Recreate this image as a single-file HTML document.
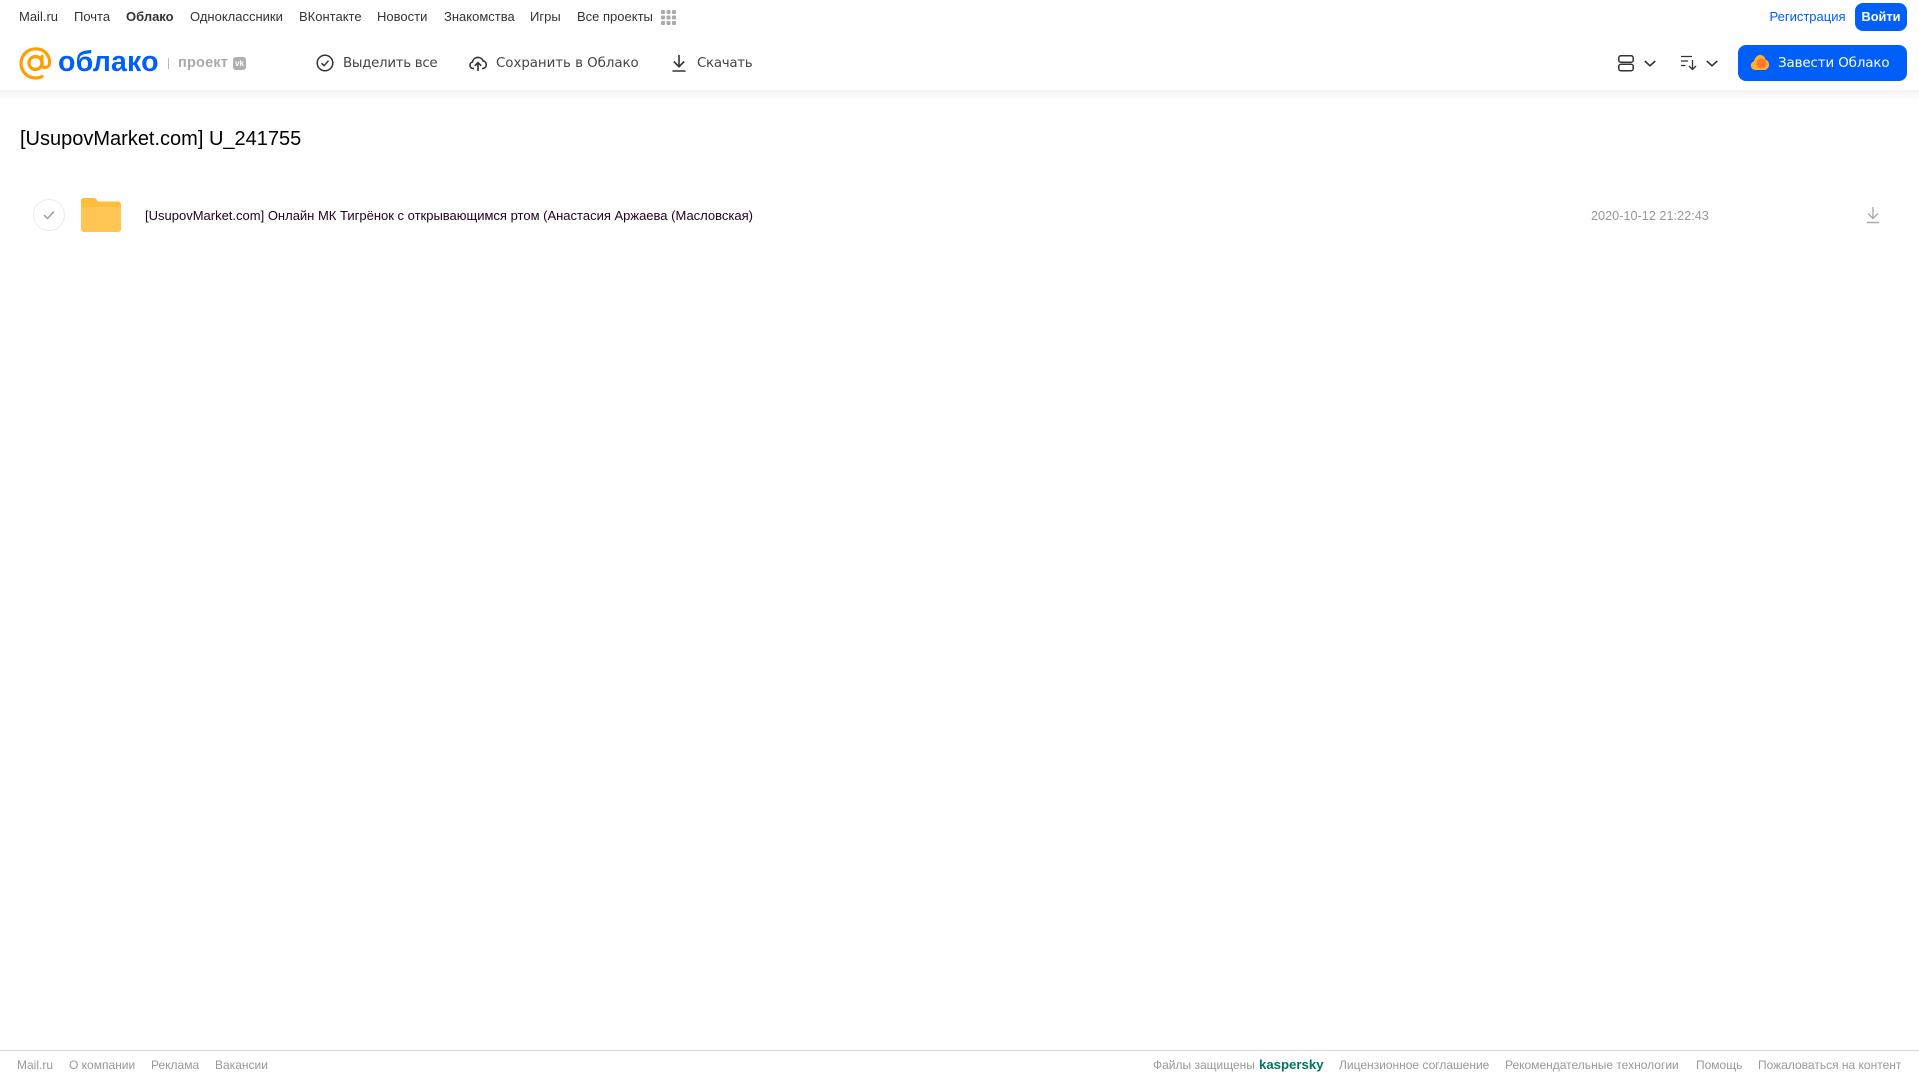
<!DOCTYPE html>
<html lang="ru"><head><meta charset="utf-8"><title>Облако</title>
<style>
html,body{margin:0;padding:0;background:#fff;overflow:hidden}
body{width:1919px;height:1079px;position:relative;font-family:"Liberation Sans",sans-serif}
.t{position:absolute;white-space:nowrap;line-height:20px}
.n{top:7px;font-size:13px;color:#333}
.b{top:54px;font-size:13.400px;color:#444;font-family:"DejaVu Sans",sans-serif;letter-spacing:-.1px}
.f{top:1055px;font-size:12px;color:#999}
svg{position:absolute;overflow:visible}
</style></head><body>
<div style="position:absolute;left:0;top:90px;width:1919px;height:10px;background:linear-gradient(#f3f3f3,#fff)"></div>

<span class="t n" style="left:19px">Mail.ru</span>
<span class="t n" style="left:74px">Почта</span>
<span class="t n" style="left:126px;font-weight:bold">Облако</span>
<span class="t n" style="left:190px">Одноклассники</span>
<span class="t n" style="left:299px">ВКонтакте</span>
<span class="t n" style="left:377px">Новости</span>
<span class="t n" style="left:444px">Знакомства</span>
<span class="t n" style="left:530px">Игры</span>
<span class="t n" style="left:577px">Все проекты</span>
<svg style="left:661px;top:10px" width="15" height="15" fill="#aaa"><rect x="0" y="0" width="4" height="4" rx="1"/><rect x="5.500" y="0" width="4" height="4" rx="1"/><rect x="11" y="0" width="4" height="4" rx="1"/><rect x="0" y="5.500" width="4" height="4" rx="1"/><rect x="5.500" y="5.500" width="4" height="4" rx="1"/><rect x="11" y="5.500" width="4" height="4" rx="1"/><rect x="0" y="11" width="4" height="4" rx="1"/><rect x="5.500" y="11" width="4" height="4" rx="1"/><rect x="11" y="11" width="4" height="4" rx="1"/></svg>

<span class="t n" style="left:1769.500px;color:#005ff9">Регистрация</span>
<div style="position:absolute;left:1855px;top:3px;width:52px;height:28px;border-radius:8px;background:#005ff9;color:#fff;font-size:12.800px;font-weight:bold;line-height:28px;text-align:center">Войти</div>

<svg style="left:19px;top:47px" width="33" height="33" viewBox="0 0 33 33" fill="none" stroke="#ff9e00" stroke-width="3.200" stroke-linecap="round"><circle cx="16.500" cy="16" r="6.500"/><path d="M23 9.500v8.500c0 3.600 6.900 3.600 7.500-1.500C31.300 8 25 1.800 16.500 1.800A14.600 14.600 0 0 0 2 16.300c0 8.300 6.500 14.700 14.500 14.700 2.500 0 4.700-.5 6.500-1.500"/></svg>
<span class="t" style="left:58px;top:45px;font-size:28.500px;line-height:34px;color:#005ff9;font-weight:bold;letter-spacing:.2px">облако</span>
<div style="position:absolute;left:168px;top:58px;width:1px;height:11px;background:#bbb"></div>
<span class="t" style="left:178px;top:53px;font-size:14.500px;font-weight:bold;color:#aaa;letter-spacing:.2px">проект</span>
<div style="position:absolute;left:233px;top:57px;width:13px;height:13px;border-radius:3px;background:#b0b0b0;color:#fff;font-size:8px;font-weight:bold;line-height:13px;text-align:center">vk</div>

<svg style="left:316px;top:54px" width="18" height="18" viewBox="0 0 18 18" fill="none" stroke="#333" stroke-width="1.500"><circle cx="9" cy="9" r="7.800"/><path d="M5.500 9.200l2.500 2.500 4.500-5"/></svg>
<span class="t b" style="left:343px;letter-spacing:-.3px">Выделить все</span>
<svg style="left:469px;top:54px" width="18" height="18" viewBox="0 0 18 18" fill="none" stroke="#333" stroke-width="1.600"><path d="M5 14.500H4a3.300 3.300 0 0 1-.5-6.500A5.500 5.500 0 0 1 14 6.800 3.900 3.900 0 0 1 14 14.500h-1"/><path d="M9 17V9M5.800 11.800L9 8.600l3.200 3.200"/></svg>
<span class="t b" style="left:496px;letter-spacing:-.05px">Сохранить в Облако</span>
<svg style="left:671px;top:54px" width="16" height="18" viewBox="0 0 16 18" fill="none" stroke="#333" stroke-width="1.600"><path d="M8 1v11.500M2.800 7.500L8 12.700l5.200-5.200M1.500 17h13"/></svg>
<span class="t b" style="left:697px;letter-spacing:-.3px">Скачать</span>

<svg style="left:1618px;top:55px" width="16" height="17" fill="none" stroke="#333" stroke-width="1.500"><rect x=".8" y=".8" width="14.400" height="6.400" rx="2"/><rect x=".8" y="9.300" width="14.400" height="6.400" rx="2"/></svg>
<svg style="left:1644px;top:60px" width="12" height="7" fill="none" stroke="#333" stroke-width="1.600"><path d="M.8 1l5.200 4.800L11.200 1"/></svg>
<svg style="left:1681px;top:55px" width="16" height="16" fill="none" stroke="#333" stroke-width="1.300"><path d="M0 1.500h11M0 6h7M0 10.500h4.500M11.500 5v9.500M8 11l3.500 3.500L15 11"/></svg>
<svg style="left:1706px;top:60px" width="12" height="7" fill="none" stroke="#333" stroke-width="1.600"><path d="M.8 1l5.200 4.800L11.200 1"/></svg>

<div style="position:absolute;left:1738px;top:45px;width:169px;height:36px;border-radius:8px;background:#005ff9"></div>
<svg style="left:1750px;top:54px" width="20" height="17"><path d="M5 16a4.500 4.500 0 0 1-1-8.800C5 3 8 .5 11 1c2.500.4 4 2.500 4.500 4.500A5.500 5.500 0 0 1 15 16z" fill="#ffb02e"/><circle cx="11.500" cy="9.500" r="5" fill="#ff7a2a"/></svg>
<span class="t b" style="left:1778px;color:#fff">Завести Облако</span>

<span class="t" style="left:20px;top:125px;font-size:20px;line-height:28px;color:#000">[UsupovMarket.com] U_241755</span>

<div style="position:absolute;left:33px;top:199px;width:30px;height:30px;border:1px solid #ececec;border-radius:50%"></div>
<svg style="left:43px;top:210px" width="12" height="10" fill="none" stroke="#999" stroke-width="1.400"><path d="M1 5l3.500 3.500L11 1.500"/></svg>
<svg style="left:81px;top:198px" width="40" height="34" viewBox="0 0 40 34"><path d="M0 3a3 3 0 0 1 3-3h9c3 0 4 1.500 5 3.500h20a3 3 0 0 1 3 3V31a3 3 0 0 1-3 3H3a3 3 0 0 1-3-3z" fill="#ffbd3d"/><path d="M0 9h40v22a3 3 0 0 1-3 3H3a3 3 0 0 1-3-3z" fill="#ffc655"/></svg>
<span class="t" style="left:145px;top:206px;font-size:13px;color:#202">[UsupovMarket.com] Онлайн МК Тигрёнок с открывающимся ртом (Анастасия Аржаева (Масловская)</span>
<span class="t" style="left:1591px;top:206px;font-size:12.700px;color:#999">2020-10-12 21:22:43</span>
<svg style="left:1866px;top:206px" width="14" height="18" viewBox="0 0 14 18" fill="none" stroke="#aaa" stroke-width="1.400"><path d="M7 1v11M2 7.500L7 12.500l5-5M1 16.500h12"/></svg>

<div style="position:absolute;left:0;top:1050px;width:1919px;height:1px;background:#d8d8d8"></div>
<span class="t f" style="left:17px">Mail.ru</span>
<span class="t f" style="left:69px">О компании</span>
<span class="t f" style="left:151px">Реклама</span>
<span class="t f" style="left:215px">Вакансии</span>
<span class="t f" style="left:1153px">Файлы защищены</span>
<span class="t f" style="left:1259px;font-size:13.200px;font-weight:bold;color:#00745f">kaspersky</span>
<span class="t f" style="left:1339px">Лицензионное соглашение</span>
<span class="t f" style="left:1505px">Рекомендательные технологии</span>
<span class="t f" style="left:1696px">Помощь</span>
<span class="t f" style="left:1758px">Пожаловаться на контент</span>
</body></html>
